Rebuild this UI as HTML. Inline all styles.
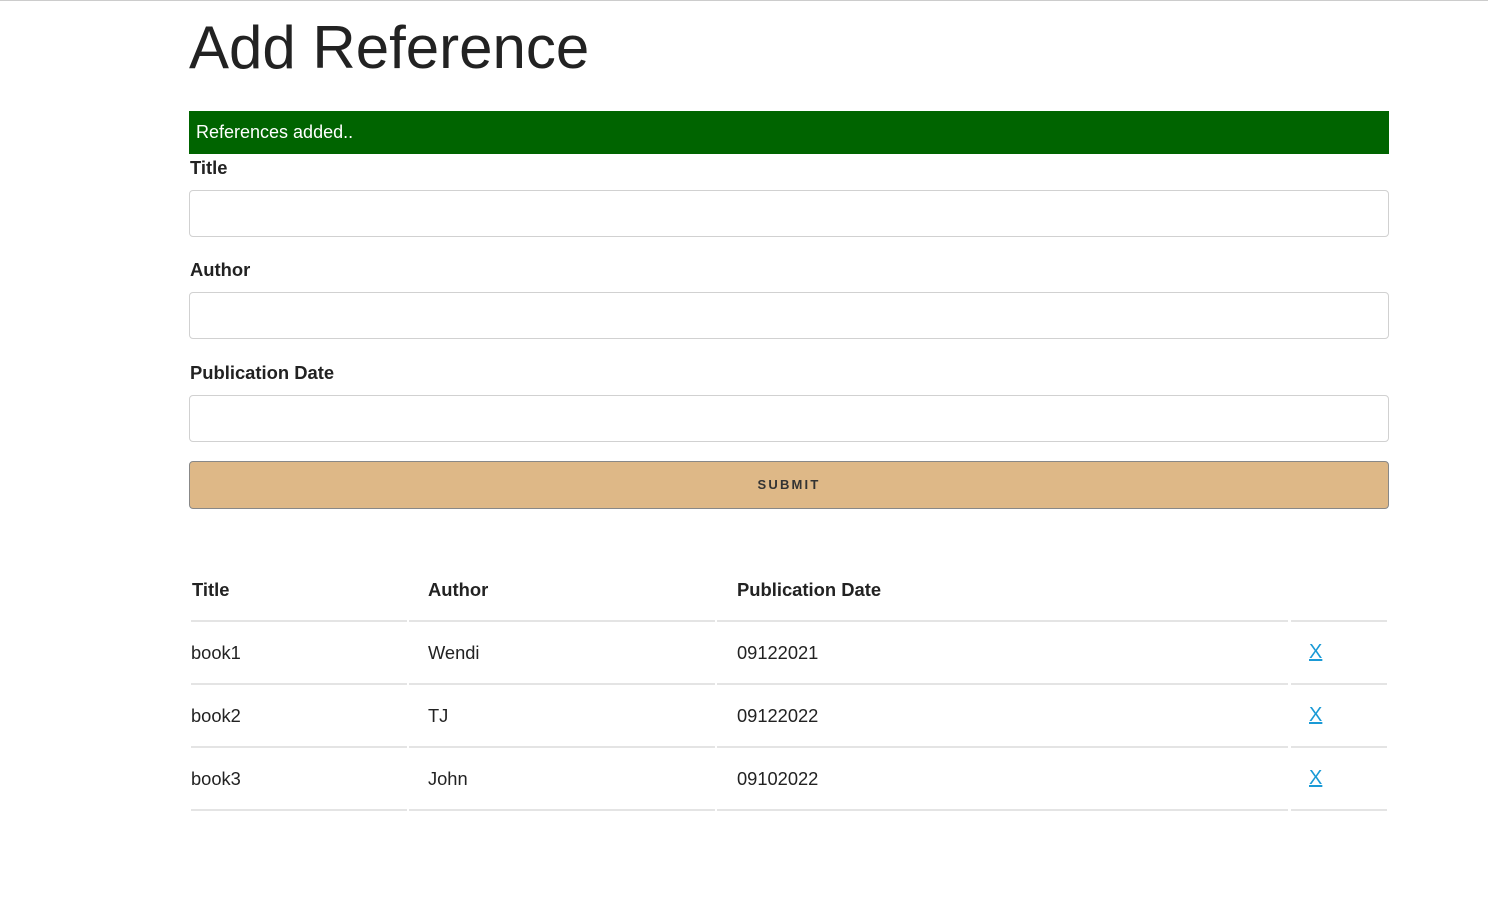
<!DOCTYPE html>
<html><head><style>
body{margin:0;width:1488px;height:910px;background:#fff;font-family:"Liberation Sans",Arial,sans-serif;color:#222;position:relative;overflow:hidden}
.top{position:absolute;left:0;top:0;width:1488px;height:1px;background:#ccc}
.a{position:absolute}
h1{position:absolute;left:189px;top:15px;margin:0;font-weight:400;font-size:60px;line-height:66px;color:#222}
.alert{left:189px;top:111px;width:1200px;height:43px;background:#006400;color:#fff;font-size:18px;line-height:42px;box-sizing:border-box;padding-left:7px}
.lbl{left:190px;font-weight:700;font-size:18.4px;color:#222}
.inp{left:189px;width:1200px;height:47px;border:1px solid #d1d1d1;border-radius:4px;box-sizing:border-box}
.btn{left:189px;top:461px;width:1200px;height:48px;background:#deb887;border:1px solid #888;border-radius:4px;box-sizing:border-box;text-align:center;font-size:13px;font-weight:700;letter-spacing:2.2px;line-height:46px;color:#333}
.ln{height:2px;background:#e4e4e4}
.th{font-weight:700;font-size:18.4px;top:579px}
.td{font-size:18.3px}
.x{color:#1a9ad6;text-decoration:underline;font-size:20px}
</style></head><body>
<div class="top"></div>
<h1>Add Reference</h1>
<div class="a alert">References added..</div>
<div class="a lbl" style="top:157px">Title</div>
<div class="a inp" style="top:190px"></div>
<div class="a lbl" style="top:259px">Author</div>
<div class="a inp" style="top:292px"></div>
<div class="a lbl" style="top:362px">Publication Date</div>
<div class="a inp" style="top:395px"></div>
<div class="a btn">SUBMIT</div>
<div class="a th" style="left:192px">Title</div>
<div class="a th" style="left:428px">Author</div>
<div class="a th" style="left:737px">Publication Date</div>
<div class="a ln" style="left:191px;width:216px;top:620px"></div><div class="a ln" style="left:409px;width:306px;top:620px"></div><div class="a ln" style="left:717px;width:571px;top:620px"></div><div class="a ln" style="left:1291px;width:96px;top:620px"></div>
<div class="a td" style="left:191px;top:642px">book1</div><div class="a td" style="left:428px;top:642px">Wendi</div><div class="a td" style="left:737px;top:642px">09122021</div><div class="a x" style="left:1309px;top:641px">X</div>
<div class="a ln" style="left:191px;width:216px;top:683px"></div><div class="a ln" style="left:409px;width:306px;top:683px"></div><div class="a ln" style="left:717px;width:571px;top:683px"></div><div class="a ln" style="left:1291px;width:96px;top:683px"></div>
<div class="a td" style="left:191px;top:705px">book2</div><div class="a td" style="left:428px;top:705px">TJ</div><div class="a td" style="left:737px;top:705px">09122022</div><div class="a x" style="left:1309px;top:704px">X</div>
<div class="a ln" style="left:191px;width:216px;top:746px"></div><div class="a ln" style="left:409px;width:306px;top:746px"></div><div class="a ln" style="left:717px;width:571px;top:746px"></div><div class="a ln" style="left:1291px;width:96px;top:746px"></div>
<div class="a td" style="left:191px;top:768px">book3</div><div class="a td" style="left:428px;top:768px">John</div><div class="a td" style="left:737px;top:768px">09102022</div><div class="a x" style="left:1309px;top:767px">X</div>
<div class="a ln" style="left:191px;width:216px;top:809px"></div><div class="a ln" style="left:409px;width:306px;top:809px"></div><div class="a ln" style="left:717px;width:571px;top:809px"></div><div class="a ln" style="left:1291px;width:96px;top:809px"></div>
</body></html>
